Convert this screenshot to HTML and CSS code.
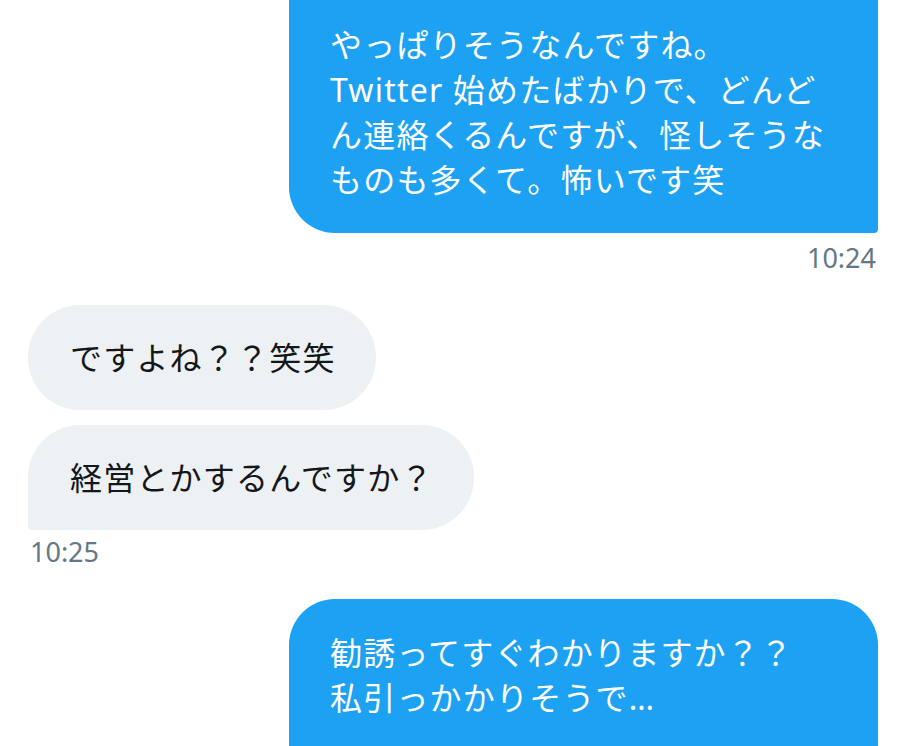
FILE: index.html
```html
<html>
	<head>
		<title>Messages</title>
		<meta charset="utf-8">
		<link rel="stylesheet" href="styles.css">
	</head>
	<body>
		<main class="thread">

			<section class="group sent">
				<p class="bubble cut">やっぱりそうなんですね。<br>Twitter 始めたばかりで、どんど<br>ん連絡くるんですが、怪しそうな<br>ものも多くて。怖いです笑</p>
				<time class="stamp">10:24</time>
			</section>

			<section class="group received">
				<p class="bubble first">ですよね？？笑笑</p>
				<p class="bubble last">経営とかするんですか？</p>
				<time class="stamp">10:25</time>
			</section>

			<section class="group sent">
				<p class="bubble open">勧誘ってすぐわかりますか？？<br>私引っかかりそうで…</p>
			</section>

		</main>
	</body>
</html>
```

FILE: styles.css
```css
body {
	margin: 0;
	background: #fff;
	font-family: "Noto Sans", "Noto Sans CJK JP", sans-serif;
	overflow: hidden;
}

.thread {
	display: flex;
	flex-direction: column;
	gap: 31px;
	margin-top: -60px;
	padding: 0 22px 0 28px;
}

.group {
	display: flex;
	flex-direction: column;
	gap: 15px;
}
.group.sent {
	align-items: flex-end;
}
.group.received {
	align-items: flex-start;
}

.bubble {
	margin: 0;
	padding: 31px 40px;
	font-size: 32px;
	line-height: 45px;
	letter-spacing: 1.2px;
}

.sent .bubble {
	width: 589px;
	box-sizing: border-box;
	padding-left: 41px;
	background: #1da1f2;
	color: #fff;
	border-radius: 46px 46px 4px 46px;
}
/* scrolled: top of this one is above the window */
.sent .bubble.cut {
	padding-top: 82px;
}
.sent .bubble.open {
	padding-bottom: 80px;
}

.received .bubble {
	padding: 30px 40px 30px 42px;
	background: #eef1f3;
	color: #14171a;
	border-radius: 52px;
}
.received .bubble.last {
	border-radius: 52px 52px 52px 4px;
}

.stamp {
	font-size: 27px;
	line-height: 32px;
	color: #657786;
}
.sent .stamp {
	margin-top: -6px;
	margin-right: 2px;
}
.received .stamp {
	margin-top: -9px;
	padding-left: 2px;
}
```
